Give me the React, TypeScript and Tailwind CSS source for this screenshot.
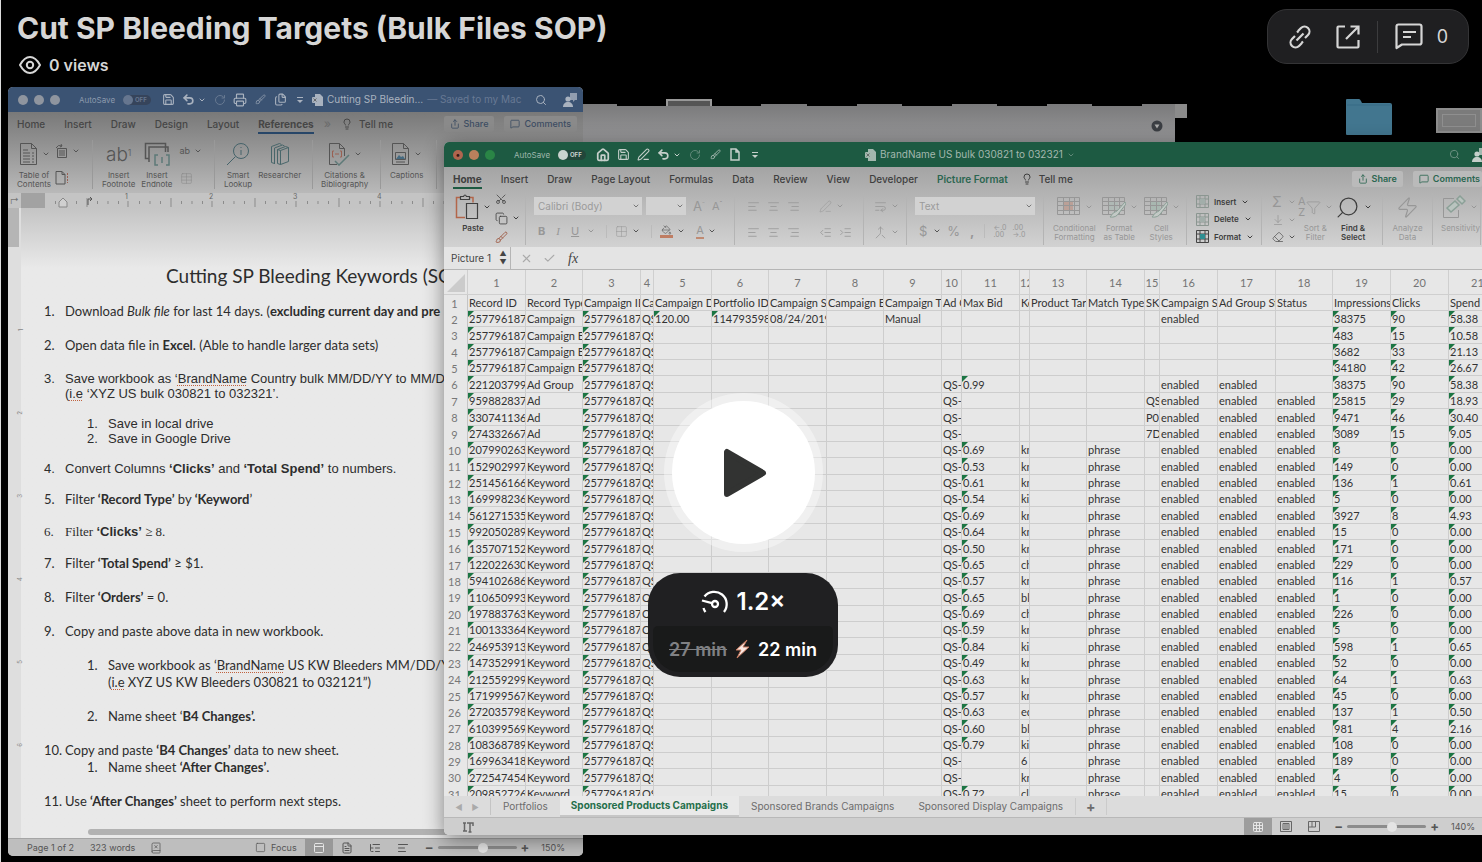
import type { ReactNode } from "react"
import {
  AlignCenter, AlignLeft, AlignRight, ArrowDownToLine, BookX, Brush, Check, ChevronDown, Copy, Eraser,
  FileText, Files, Funnel, Grid2x2, Grid3x3, House, IndentDecrease, IndentIncrease, Lightbulb, ListTree,
  Merge, MessageSquare, PaintBucket, PanelTop, PenLine, Printer, RotateCcw, Save, Scissors, Search, Share,
  Square, Table, Undo2, WrapText, X, Zap,
} from "lucide-react"

const ui = "font-['Inter',sans-serif]"
const doc = "font-['Lato',sans-serif]"
const arial = "font-['Liberation_Sans',sans-serif]"

const COLS = [
  "w-[24px]", "w-[58px]", "w-[57px]", "w-[58px]", "w-[13px]", "w-[58px]", "w-[57px]", "w-[58px]",
  "w-[57px]", "w-[58px]", "w-[20px]", "w-[58px]", "w-[10px]", "w-[57px]", "w-[58px]", "w-[15px]",
  "w-[58px]", "w-[58px]", "w-[57px]", "w-[58px]", "w-[58px]", "w-[58px]",
]

const HEADERS = [
  "Record ID", "Record Type", "Campaign ID", "Ca", "Campaign D", "Portfolio ID", "Campaign S",
  "Campaign E", "Campaign T", "Ad G", "Max Bid", "Ke", "Product Tar", "Match Type", "SKU",
  "Campaign S", "Ad Group St", "Status", "Impressions", "Clicks", "Spend",
]

const on = "enabled"
const campaign = "257796187"

// record, bid, keyword, impressions, clicks, spend
const KEYWORDS = [
  ["207990263", "0.69", "kn", "8", "0", "0.00"],
  ["152902997", "0.53", "kn", "149", "0", "0.00"],
  ["251456166", "0.61", "kn", "136", "1", "0.61"],
  ["169998236", "0.54", "ki", "5", "0", "0.00"],
  ["561271535", "0.69", "kn", "3927", "8", "4.93"],
  ["992050289", "0.64", "kn", "15", "0", "0.00"],
  ["135707152", "0.50", "kn", "171", "0", "0.00"],
  ["122022630", "0.65", "ch", "229", "0", "0.00"],
  ["594102686", "0.57", "kn", "116", "1", "0.57"],
  ["110650993", "0.65", "bl", "1", "0", "0.00"],
  ["197883763", "0.69", "ch", "226", "0", "0.00"],
  ["100133364", "0.59", "kn", "5", "0", "0.00"],
  ["246953913", "0.84", "ki", "598", "1", "0.65"],
  ["147352991", "0.49", "kn", "52", "0", "0.00"],
  ["212559299", "0.63", "kn", "64", "1", "0.63"],
  ["171999567", "0.57", "kn", "45", "0", "0.00"],
  ["272035798", "0.63", "ed", "137", "1", "0.50"],
  ["610399569", "0.60", "bl", "981", "4", "2.16"],
  ["108368789", "0.79", "ki", "108", "0", "0.00"],
  ["169963418", "", "6", "189", "0", "0.00"],
  ["272547454", "", "kn", "4", "0", "0.00"],
  ["209852726", "0.72", "cl", "15", "0", "0.00"],
]

const ROWS: string[][] = [
  HEADERS,
  [campaign, "Campaign", campaign, "QS", "120.00", "114793598", "08/24/2019", "", "Manual", "", "", "", "", "", "", on, "", "", "38375", "90", "58.38"],
  [campaign, "Campaign B", campaign, "QS", "", "", "", "", "", "", "", "", "", "", "", "", "", "", "483", "15", "10.58"],
  [campaign, "Campaign B", campaign, "QS", "", "", "", "", "", "", "", "", "", "", "", "", "", "", "3682", "33", "21.13"],
  [campaign, "Campaign B", campaign, "QS", "", "", "", "", "", "", "", "", "", "", "", "", "", "", "34180", "42", "26.67"],
  ["221203799", "Ad Group", campaign, "QS", "", "", "", "", "", "QS-", "0.99", "", "", "", "", on, on, "", "38375", "90", "58.38"],
  ["959882837", "Ad", campaign, "QS", "", "", "", "", "", "QS-", "", "", "", "", "QS", on, on, on, "25815", "29", "18.93"],
  ["330741136", "Ad", campaign, "QS", "", "", "", "", "", "QS-", "", "", "", "", "P0", on, on, on, "9471", "46", "30.40"],
  ["274332667", "Ad", campaign, "QS", "", "", "", "", "", "QS-", "", "", "", "", "7D", on, on, on, "3089", "15", "9.05"],
  ...KEYWORDS.map(([id, bid, kw, imp, clicks, spend]) => [
    id, "Keyword", campaign, "QS", "", "", "", "", "", "QS-", bid, kw, "", "phrase", "", on, on, on, imp, clicks, spend,
  ]),
]

// columns whose numbers are stored as text get the green corner
const FLAGGED = [0, 2, 4, 5, 10, 18, 19, 20]
const flag =
  "before:absolute before:left-0 before:top-0 before:size-[6px] before:bg-[#1b7543] before:[clip-path:polygon(0_0,100%_0,0_100%)]"

function Caret({ className = "" }: { className?: string }) {
  return <ChevronDown size={8} strokeWidth={3} className={`shrink-0 ${className}`} />
}

function Toggle({ className }: { className: string }) {
  return (
    <button className={`flex h-[10px] w-[28px] items-center gap-[2px] rounded-full text-[6px] font-bold ${className}`} aria-label="AutoSave">
      <span className="size-[10px] rounded-full bg-current" />
      OFF
    </button>
  )
}

function Glyph({ w = 24, h = 24, children }: { w?: number; h?: number; children: ReactNode }) {
  return (
    <svg width={w} height={h} viewBox={`0 0 ${w} ${h}`} fill="none" stroke="currentColor" strokeWidth="1" className="shrink-0">
      {children}
    </svg>
  )
}

function TocIcon() {
  return (
    <Glyph w={19}>
      <path d="M1.5 1.500h11l5 5v16h-16zM12.500 1.500v5h5" />
      <path d="M4 8h5M4 11h7M4 14h7M4 17h7M4 20h7M13 11h2M13 14h2M13 17h2M13 20h2" />
    </Glyph>
  )
}

function EndnoteIcon() {
  return (
    <Glyph w={26}>
      <path d="M5 16.500H1.500v-15h20V10M5 20V5h19v5" strokeWidth="1.500" />
      <path d="M14 13h-3v10h3M22 13h3v10h-3M18 15v6" stroke="#5e7a78" strokeWidth="1.500" />
    </Glyph>
  )
}

function BooksIcon() {
  return (
    <Glyph w={20}>
      <path d="M1.500 4.500l8-3 2 1M1.500 4.500v16l3 1M4.500 6l8-3 2 1M4.500 6v16M7.500 7.500l3 1v14l-3-1zM10.500 8.500l8-3v14l-8 3M7.500 7.500l8-3 3 1" stroke="#48666a" />
    </Glyph>
  )
}

function CitationIcon() {
  return (
    <Glyph w={22}>
      <path d="M9 22.500H1.500v-21h10l5 5V14M11.500 1.500v5h5" />
      <path d="M6 9H4.500v6H6M12 9h1.500v6H12M7 12h4" stroke="#9a6052" />
      <path d="M7 19l4 4 10-10" stroke="#5e7a78" strokeWidth="1.500" />
    </Glyph>
  )
}

function CaptionIcon() {
  return (
    <Glyph w={19}>
      <path d="M1.500 1.500h11l5 5v16h-16zM12.500 1.500v5h5M5 20h9" />
      <path d="M4.500 10.500h10v7h-10z" />
      <path d="M5 17l3-4 2 2 2-1 2 3z" fill="#456a80" stroke="none" />
    </Glyph>
  )
}

function PasteIcon() {
  return (
    <Glyph w={24} h={26}>
      <path d="M6 3.500H1.500v20H10M14 3.500h4v5" stroke="#b3664a" strokeWidth="1.500" />
      <path d="M5.500 5.500v-3h3q1.500-3 3 0h3v3zM11.500 9.500h11v15h-11z" strokeWidth="1.200" />
    </Glyph>
  )
}

function GridGlyph({ brush = false, accent = "#a9b9b2" }: { brush?: boolean; accent?: string }) {
  return (
    <Glyph w={25} h={24}>
      <rect x="8" y="6" width="9" height="9" fill={accent} stroke="none" opacity="0.6" />
      <path d="M1.500 2.500h22v17h-22zM1.500 6.500h22M1.500 10.500h22M1.500 15.500h22M7.500 2.500v17M13.500 2.500v17M18.500 2.500v17" />
      {brush && <path d="M24 7l-8 9q-4 1-7 6 6 1 9-4l7-9z" fill="#c3c9c6" stroke="#8ba097" />}
    </Glyph>
  )
}

function SensitivityIcon() {
  return (
    <Glyph w={24}>
      <path d="M12 3.500H1.500v19h15V15" />
      <path d="M5 13l8-7 4 4-8 7zM15 4l3-3 5 5-3 3z" stroke="#8ba097" strokeWidth="1.500" fill="#b9c4bf" />
    </Glyph>
  )
}

function CellsIcon({ active = false }: { active?: boolean }) {
  return (
    <svg width="13" height="13" viewBox="0 0 13 13" fill="none" stroke={active ? "#444" : "#8b9691"}>
      <path d="M.5.500h12v12H.500zM.500 4h12M.500 9h12M4 .500v12M9 .500v12" />
      <rect x="4" y="4" width="5" height="5" fill={active ? "#2f8f92" : "#a2aeaa"} stroke="none" />
    </svg>
  )
}

function DocIcon() {
  return (
    <svg width="11" height="12" viewBox="0 0 11 12" fill="currentColor">
      <path d="M3 0h5l3 3v9H3z" />
      <rect x="0" y="3" width="6" height="6" rx="1" />
      <path d="M1.500 4.500l3 3m0-3l-3 3" stroke="#555" strokeWidth="0.8" />
    </svg>
  )
}

function PersonIcon() {
  return (
    <svg width="14" height="14" viewBox="0 0 14 14" fill="currentColor">
      <path d="M7 0h7v7h-2l-2 2V7H7z" opacity="0.8" />
      <circle cx="5" cy="6" r="2.600" />
      <path d="M0 14c0-3 2-5 5-5s5 2 5 5z" />
    </svg>
  )
}

function QuickMenu() {
  return (
    <svg width="8" height="8" viewBox="0 0 8 8" fill="currentColor">
      <rect x="1" y="1" width="6" height="1" />
      <path d="M1 4h6L4 7z" />
    </svg>
  )
}

function TitleBox({ children }: { children: ReactNode }) {
  return <span className="flex w-5 shrink-0 items-center justify-center">{children}</span>
}

function BigTool({ icon, label, className = "", caret = false }: { icon: ReactNode; label: ReactNode; className?: string; caret?: boolean }) {
  return (
    <button className={`flex shrink-0 flex-col items-center text-center text-[8px] leading-[9px] ${className}`}>
      <span className="flex h-7 items-center gap-1">
        {icon}
        {caret && <Caret />}
      </span>
      <span className="mt-[3px] whitespace-nowrap">{label}</span>
    </button>
  )
}

function WordTitleBar() {
  return (
    <div className="flex h-[25px] shrink-0 items-center bg-[#3b5373] text-[9px] text-[#a9b2bf]">
      <div className="flex w-[71px] gap-[6px] pl-[10px]">
        <span className="size-[10px] rounded-full bg-[#8f959f]" />
        <span className="size-[10px] rounded-full bg-[#8f959f]" />
        <span className="size-[10px] rounded-full bg-[#8f959f]" />
      </div>
      <span className="w-[44px] text-[8px] text-[#8c9aad]">AutoSave</span>
      <Toggle className="bg-[#36445b] text-[#66768f]" />
      <div className="ml-[7px] flex items-center">
        <TitleBox><Save size={13} /></TitleBox>
        <TitleBox><Undo2 size={13} strokeWidth={3} /></TitleBox>
        <Caret className="mr-1" />
        <TitleBox><RotateCcw size={12} className="-scale-x-100 opacity-40" /></TitleBox>
        <TitleBox><Printer size={14} /></TitleBox>
        <TitleBox><Brush size={11} className="opacity-70" /></TitleBox>
        <TitleBox><Files size={13} /></TitleBox>
        <TitleBox><QuickMenu /></TitleBox>
      </div>
      <span className="ml-[2px] flex items-center gap-1 whitespace-nowrap text-[10px]">
        <DocIcon /> Cutting SP Bleedin…
        <span className="text-[#687993]">— Saved to my Mac</span>
      </span>
      <div className="ml-auto flex items-center gap-4 pr-[6px]">
        <Search size={12} strokeWidth={2} />
        <PersonIcon />
      </div>
    </div>
  )
}

function WordRibbon() {
  return (
    <div className="shrink-0 bg-linear-to-b from-[#797979] to-[#b9b9b9] text-[#464646]">
      <nav className="flex h-6 items-center pl-[9px] text-[10px] font-medium">
        <div className="flex gap-[19px]">
          {["Home", "Insert", "Draw", "Design", "Layout"].map((tab) => (
            <button key={tab}>{tab}</button>
          ))}
          <button className="border-b-2 border-[#274668] pt-[2px] font-bold">References</button>
        </div>
        <span className="mx-[10px] text-[12px] text-[#6d6d6d]">»</span>
        <Lightbulb size={12} />
        <button className="ml-[6px]">Tell me</button>
        <button className="ml-auto flex items-center gap-1 rounded-xs bg-[#8a8a8a] px-[6px] py-px text-[9px] text-[#3d4d63]">
          <Share size={10} /> Share
        </button>
        <button className="mr-[6px] ml-[10px] flex items-center gap-1 rounded-xs bg-[#8a8a8a] px-[6px] py-px text-[9px] text-[#3d4d63]">
          <MessageSquare size={10} /> Comments
        </button>
      </nav>
      <div className="flex h-[57px] items-stretch text-[#555] [&>div]:my-1 [&>div]:shrink-0 [&>div]:border-r [&>div]:border-[#999]">
        <div className="flex w-[85px] gap-1 pl-[9px]">
          <BigTool icon={<TocIcon />} caret label={<>Table of<br />Contents</>} />
          <div className="flex flex-col justify-between py-1">
            <span className="flex items-center gap-1">
              <Glyph w={13} h={14}><path d="M2.500 4.500h9v9h-9zM4 7h6M4 9h6M4 11h6M1 4q2-4 6-2l-1-2m1 2l-2 1" /></Glyph>
              <Caret />
            </span>
            <Glyph w={14} h={14}><path d="M1 .500h6l3 3v9.500H1zM7 .500v3h3" /><path d="M12.500 2v10" stroke="#9a6052" strokeDasharray="2 1" /></Glyph>
          </div>
        </div>
        <div className="flex w-[122px] gap-[6px] pl-[9px]">
          <BigTool icon={<span className="text-[19px] font-light">ab<sup className="text-[9px]">1</sup></span>} label={<>Insert<br />Footnote</>} />
          <BigTool icon={<EndnoteIcon />} label={<>Insert<br />Endnote</>} />
          <div className="flex flex-col justify-between py-1 pl-px">
            <span className="flex items-center gap-1 text-[9px]">ab<Caret /></span>
            <Table size={13} strokeWidth={1} className="opacity-40" />
          </div>
        </div>
        <div className="flex w-[98px] gap-[6px] pl-[9px]">
          <BigTool
            icon={
              <Glyph>
                <circle cx="15" cy="9" r="7.500" stroke="#45636a" />
                <path d="M9.500 14.500L1 23M15 8v5M15 5v1" stroke="#45636a" />
              </Glyph>
            }
            label={<>Smart<br />Lookup</>}
          />
          <BigTool icon={<BooksIcon />} label="Researcher" />
        </div>
        <div className="flex w-[68px] pl-2">
          <BigTool icon={<CitationIcon />} caret label={<>Citations &amp;<br />Bibliography</>} />
        </div>
        <div className="flex w-[56px] pl-[9px]">
          <BigTool icon={<CaptionIcon />} caret label="Captions" />
        </div>
      </div>
    </div>
  )
}

function Squiggle({ children }: { children: ReactNode }) {
  return <span className="underline decoration-[#c0623f] decoration-dotted decoration-1 underline-offset-2">{children}</span>
}

function Item({ n, children, className = "" }: { n: string; children: ReactNode; className?: string }) {
  return (
    <li className={`flex ${className}`}>
      <span className="w-[21px] shrink-0">{n}</span>
      <div>{children}</div>
    </li>
  )
}

function WordPage() {
  return (
    <div className="flex min-h-0 flex-1">
      <div className="flex w-[13px] shrink-0 flex-col items-end gap-[83px] bg-[#dedede] pr-[2px] text-[6px] leading-none text-[#888]">
        <span className="h-[39px] w-[11px] bg-[#b5b5b5]" />
        {[1, 2, 3, 4, 5, 6].map((n) => (
          <span key={n} className="h-0 -rotate-90">{n}</span>
        ))}
      </div>
      <div className="flex min-w-0 flex-1 flex-col overflow-hidden bg-[#e9e9e9] bg-linear-to-b from-[#c4c4c4] to-[#e9e9e9] to-[60px]">
        <div className={`flex-1 pt-14 pl-[23px] text-[13px] leading-[17px] whitespace-nowrap text-[#2d2d2d] ${doc}`}>
          <h2 className="pl-[122px] text-[19px] leading-6">Cutting SP Bleeding Keywords (SO</h2>
          <ol className="mt-[15px]">
            <Item n="1.">
              Download <em>Bulk file</em> for last 14 days. (<b>excluding current day and pre</b>
            </Item>
            <Item n="2." className="mt-[17px]">
              Open data file in <b>Excel</b>. (Able to handle larger data sets)
            </Item>
            <Item n="3." className={`mt-[17px] leading-[15px] ${arial}`}>
              Save workbook as ‘<Squiggle>BrandName</Squiggle> Country bulk MM/DD/YY to MM/DD<br />
              (<Squiggle>i.e</Squiggle> ‘XYZ US bulk 030821 to 032321’.
              <ol className="mt-[15px] pl-[22px]">
                <Item n="1.">Save in local drive</Item>
                <Item n="2.">Save in Google Drive</Item>
              </ol>
            </Item>
            <Item n="4." className={`mt-[15px] leading-[15px] ${arial}`}>
              Convert Columns <b>‘Clicks’</b> and <b>‘Total Spend’</b> to numbers.
            </Item>
            <Item n="5." className="mt-[15px]">
              Filter <b>‘Record Type’</b> by <b>‘Keyword</b>’
            </Item>
            <Item n="6." className="mt-[15px] font-['Liberation_Serif',serif]">
              Filter <b className={arial}>‘Clicks’</b> ≥ 8.
            </Item>
            <Item n="7." className="mt-[15px]">
              Filter <b>‘Total Spend’</b> ≥ $1.
            </Item>
            <Item n="8." className="mt-[17px]">
              Filter <b>‘Orders’</b> = 0.
            </Item>
            <Item n="9." className="mt-[17px]">
              Copy and paste above data in new workbook.
              <ol className="mt-[17px] pl-[22px]">
                <Item n="1.">
                  Save workbook as ‘<Squiggle>BrandName</Squiggle> US KW Bleeders MM/DD/YY<br />
                  (<Squiggle>i.e</Squiggle> XYZ US KW Bleeders 030821 to 032121”)
                </Item>
                <Item n="2." className="mt-[17px]">Name sheet ‘<b>B4 Changes’.</b></Item>
              </ol>
            </Item>
            <Item n="10." className="mt-[17px]">
              Copy and paste <b>‘B4 Changes’</b> data to new sheet.
              <ol className="pl-[22px]">
                <Item n="1.">Name sheet <b>‘After Changes’</b>.</Item>
              </ol>
            </Item>
            <Item n="11." className="mt-[17px]">
              Use <b>‘After Changes’</b> sheet to perform next steps.
            </Item>
          </ol>
        </div>
        <div className="mb-[3px] ml-[67px] h-[6px] shrink-0 rounded-l-full bg-[#b2b2b2]" />
      </div>
    </div>
  )
}

function Zoom({ value, thumb }: { value: string; thumb: number }) {
  return (
    <div className="flex items-center gap-1 text-[#555]">
      <button className="text-[13px] leading-none font-bold" aria-label="Zoom out">−</button>
      <input
        type="range"
        aria-label="Zoom"
        defaultValue={thumb}
        className="h-[3px] w-[79px] appearance-none rounded-full bg-[#8c8c8c] [&::-webkit-slider-thumb]:size-[10px] [&::-webkit-slider-thumb]:appearance-none [&::-webkit-slider-thumb]:rounded-full [&::-webkit-slider-thumb]:bg-[#e4e4e4]"
      />
      <button className="text-[13px] leading-none font-bold" aria-label="Zoom in">+</button>
      <span className="ml-2 text-[9px]">{value}</span>
    </div>
  )
}

function WordWindow() {
  return (
    <section className={`absolute top-[87px] bottom-[6px] left-2 flex w-[575px] flex-col overflow-hidden rounded-[5px] bg-[#c6c6c6] ${ui}`}>
      <WordTitleBar />
      <WordRibbon />
      <div className="flex h-[15px] shrink-0 items-center bg-[#c4c4c4] text-[7px] text-[#777]">
        <span className="w-[13px] text-center text-[9px]">↱</span>
        <span className="h-full w-[24px] bg-[#a2a2a2]" />
        <svg className="h-full flex-1" preserveAspectRatio="xMinYMin slice">
          <defs>
            <pattern id="ticks" width="84" height="15" patternUnits="userSpaceOnUse">
              <path d="M10.500 8v3M21 8v3M31.500 8v3M42 5v9M52.500 8v3M63 8v3M73.500 8v3M83 8v6" stroke="#8b8b8b" fill="none" />
            </pattern>
          </defs>
          <rect width="100%" height="15" fill="url(#ticks)" />
          <path d="M14 9l4-4 4 4v5h-8z" fill="#d0d0d0" stroke="#888" />
          <path d="M43 12V6h4m-2-2l2 2-2 2" fill="none" stroke="#555" />
          {[1, 2, 3, 4].map((n) => (
            <text key={n} x={n * 84 - 4} y="6" fill="#666">{n}</text>
          ))}
        </svg>
      </div>
      <WordPage />
      <footer className="flex h-[18px] shrink-0 items-center border-t border-[#a5a5a5] bg-[#bebebe] pl-[19px] text-[9px] text-[#555]">
        <span>Page 1 of 2</span>
        <span className="ml-4">323 words</span>
        <BookX size={12} strokeWidth={1.5} className="ml-[15px]" />
        <div className="ml-auto flex h-full items-center">
          <Square size={11} strokeWidth={1.5} className="mr-[5px]" />
          <span>Focus</span>
          <button className="mx-2 flex h-full w-7 items-center justify-center bg-[#989898] text-[#e5e5e5]" aria-label="Print layout"><PanelTop size={12} /></button>
          <FileText size={12} className="mr-4" />
          <ListTree size={12} className="mr-4" />
          <AlignLeft size={12} className="mr-4" />
          <Zoom value="150%" thumb={58} />
        </div>
        <span className="w-[18px]" />
      </footer>
    </section>
  )
}

function ExcelTitleBar() {
  return (
    <div className="flex h-[25px] shrink-0 items-center bg-[#1d5a42] text-[#c5cfca]">
      <div className="flex w-[70px] gap-[6px] pl-[9px]">
        <span className="flex size-[10px] items-center justify-center rounded-full bg-[#b0654f] text-[9px] leading-none font-bold text-[#3b1510]">•</span>
        <span className="size-[10px] rounded-full bg-[#b8805c]" />
        <span className="size-[10px] rounded-full bg-[#2a8546]" />
      </div>
      <span className="w-[44px] text-[8px] text-[#9fb8ad]">AutoSave</span>
      <Toggle className="bg-[#22463a] text-[#c9d2ce]" />
      <div className="flex w-[279px] items-center pl-[7px]">
        <TitleBox><House size={14} strokeWidth={3} /></TitleBox>
        <TitleBox><Save size={13} /></TitleBox>
        <TitleBox><PenLine size={13} /></TitleBox>
        <TitleBox><Undo2 size={13} strokeWidth={3} /></TitleBox>
        <Caret className="mr-1" />
        <TitleBox><RotateCcw size={12} className="-scale-x-100 opacity-40" /></TitleBox>
        <TitleBox><Brush size={11} className="opacity-80" /></TitleBox>
        <TitleBox>
          <Glyph w={10} h={13}><path d="M1 1h5l3 3v8H1zM6 1v3h3" strokeWidth="1.500" /></Glyph>
        </TitleBox>
        <TitleBox><QuickMenu /></TitleBox>
      </div>
      <span className="flex items-center gap-1 text-[10px] whitespace-nowrap text-[#a3b8ae]">
        <DocIcon /> BrandName US bulk 030821 to 032321
        <Caret className="opacity-50" />
      </span>
      <div className="ml-auto flex items-center gap-3">
        <Search size={11} className="opacity-50" />
        <span className="-mr-1"><PersonIcon /></span>
      </div>
    </div>
  )
}

function CellTool({ icon, label }: { icon: ReactNode; label: string }) {
  return (
    <button className="flex items-center gap-[5px] text-[8px] font-semibold text-[#3d3d3d]">
      {icon}
      {label}
      <Caret />
    </button>
  )
}

function Picker({ label, value, className }: { label: string; value: string; className: string }) {
  return (
    <label className={`relative flex h-[18px] items-center bg-[#d2d2d2] ${className}`}>
      <select aria-label={label} className="h-full w-full appearance-none pl-1 text-[10px] text-[#9a9a9a]">
        <option>{value}</option>
      </select>
      <Caret className="absolute right-[2px] text-[#777]" />
    </label>
  )
}

function ExcelRibbon() {
  const tabs = ["Insert", "Draw", "Page Layout", "Formulas", "Data", "Review", "View", "Developer"]
  return (
    <div className="shrink-0 bg-linear-to-b from-[#a4a4a4] to-[#d2d2d2] text-[#3f3f3f]">
      <nav className="flex h-6 items-center pl-[9px] text-[10px] font-medium whitespace-nowrap">
        <div className="flex gap-[19px]">
          <button className="border-b-2 border-[#1d5a42] pt-[2px] font-bold">Home</button>
          {tabs.map((tab) => (
            <button key={tab}>{tab}</button>
          ))}
          <button className="font-semibold text-[#2b6650]">Picture Format</button>
        </div>
        <Lightbulb size={12} className="ml-[13px]" />
        <button className="ml-[6px]">Tell me</button>
        <button className="ml-auto flex items-center gap-1 rounded-xs bg-[#bababa] px-[6px] py-px text-[9px] font-semibold text-[#2b6650]">
          <Share size={10} /> Share
        </button>
        <button className="ml-[10px] flex items-center gap-1 rounded-xs bg-[#bababa] py-px pr-[2px] pl-[6px] text-[9px] font-semibold text-[#2b6650]">
          <MessageSquare size={10} /> Comments
        </button>
      </nav>
      <div className="flex h-14 overflow-hidden text-[#979797] [&>div]:my-[2px] [&>div]:shrink-0 [&>div]:border-r [&>div]:border-[#b4b4b4]">
        <div className="flex w-[82px] gap-1 pl-[11px] text-[#3f3f3f]">
          <BigTool icon={<PasteIcon />} caret label="Paste" className="font-semibold" />
          <div className="flex flex-col justify-between pb-px">
            <Scissors size={12} strokeWidth={1.5} className="-rotate-90" />
            <span className="flex items-center gap-1"><Copy size={13} strokeWidth={1.5} /><Caret /></span>
            <Brush size={13} strokeWidth={1.5} className="text-[#9a5038]" />
          </div>
        </div>
        <div className="flex w-[209px] flex-col justify-between pt-1 pb-[6px] pl-2">
          <div className="flex items-center gap-1">
            <Picker label="Font" value="Calibri (Body)" className="w-[108px]" />
            <Picker label="Font size" value="" className="w-[40px]" />
            <span className="pl-[3px] text-[13px] leading-none">A<sup className="text-[7px]">ˆ</sup></span>
            <span className="pl-[3px] text-[11px] leading-none">A<sup className="text-[7px]">ˇ</sup></span>
          </div>
          <div className="flex items-center gap-[11px] pl-1 text-[11px] leading-4">
            <b>B</b>
            <i className="font-['Liberation_Serif',serif]">I</i>
            <span className="flex items-center gap-2"><u>U</u><Caret /></span>
            <span className="flex items-center gap-1 border-l border-[#bbb] pl-2"><Grid2x2 size={13} strokeWidth={1} /><Caret className="text-[#555]" /></span>
            <span className="flex items-center gap-1 border-l border-[#bbb] pl-2 text-[#555]"><PaintBucket size={13} strokeWidth={1.5} className="border-b-[3px] border-[#bf7d63]" /><Caret /></span>
            <span className="flex items-center gap-1"><span className="border-b-2 border-[#c08a72] leading-[13px]">A</span><Caret className="text-[#555]" /></span>
          </div>
        </div>
        <div className="grid w-[129px] grid-cols-[20px_20px_20px_auto] items-center pl-3">
          <AlignLeft size={13} strokeWidth={1.5} />
          <AlignCenter size={13} strokeWidth={1.5} />
          <AlignRight size={13} strokeWidth={1.5} />
          <span className="flex items-center gap-1 pl-3"><PenLine size={13} strokeWidth={1} /><Caret /></span>
          <AlignLeft size={13} strokeWidth={1.5} />
          <AlignCenter size={13} strokeWidth={1.5} />
          <AlignRight size={13} strokeWidth={1.5} />
          <span className="flex items-center gap-[7px] pl-3">
            <IndentDecrease size={13} strokeWidth={1.5} />
            <IndentIncrease size={13} strokeWidth={1.5} />
          </span>
        </div>
        <div className="flex w-[43px] flex-col justify-around pl-[10px]">
          <span className="flex items-center gap-1"><WrapText size={13} strokeWidth={1.5} /><Caret /></span>
          <span className="flex items-center gap-1"><Merge size={13} strokeWidth={1.5} /><Caret /></span>
        </div>
        <div className="flex w-[137px] flex-col justify-between pt-1 pb-[6px] pl-2">
          <Picker label="Number format" value="Text" className="w-[120px]" />
          <div className="flex items-center gap-[6px] pl-1 text-[13px] leading-4">
            <span className="flex items-center gap-[6px]">$<Caret className="text-[#555]" /></span>
            <span>%</span>
            <b className="px-1">,</b>
            <span className="border-l border-[#bbb] pl-2 text-[7px] leading-[7px]">←.0<br />.00</span>
            <span className="text-[7px] leading-[7px]">.00<br />→.0</span>
          </div>
        </div>
        <div className="flex w-[143px] gap-[5px] pl-[9px]">
          <BigTool icon={<GridGlyph accent="#bd8f80" />} caret label={<>Conditional<br />Formatting</>} />
          <BigTool icon={<GridGlyph brush />} caret label={<>Format<br />as Table</>} />
          <BigTool icon={<GridGlyph brush accent="#9db5aa" />} caret label={<>Cell<br />Styles</>} />
        </div>
        <div className="flex w-[75px] flex-col justify-between py-[2px] pl-[9px]">
          <CellTool icon={<CellsIcon />} label="Insert" />
          <CellTool icon={<CellsIcon />} label="Delete" />
          <CellTool icon={<CellsIcon active />} label="Format" />
        </div>
        <div className="flex w-[121px] gap-[2px] pl-[10px]">
          <div className="flex flex-col justify-between py-[2px]">
            <span className="flex items-center gap-1 text-[14px] leading-none"><span className="w-3">Σ</span><Caret /></span>
            <span className="flex items-center gap-1"><ArrowDownToLine size={12} strokeWidth={1.5} /><Caret /></span>
            <span className="flex items-center gap-1 text-[#555]"><Eraser size={12} strokeWidth={1.5} /><Caret /></span>
          </div>
          <BigTool
            icon={
              <span className="flex items-center">
                <span className="text-[11px] leading-[11px]">A<br />Z</span>
                <Funnel size={15} strokeWidth={1.2} />
              </span>
            }
            caret
            label={<>Sort &amp;<br />Filter</>}
          />
          <BigTool icon={<Search size={25} strokeWidth={1.2} className="-scale-x-100" />} caret label={<>Find &amp;<br />Select</>} className="font-semibold text-[#3f3f3f]" />
        </div>
        <div className="flex w-[50px] justify-center">
          <BigTool icon={<Zap size={23} strokeWidth={1.2} />} label={<>Analyze<br />Data</>} />
        </div>
        <div className="flex pl-2">
          <BigTool icon={<SensitivityIcon />} caret label="Sensitivity" />
        </div>
      </div>
    </div>
  )
}

function SheetGrid() {
  return (
    <div className="min-h-0 flex-1 overflow-hidden">
      <table className={`w-[1063px] table-fixed border-separate border-spacing-0 text-[11px] leading-[15px] text-[#333] ${doc}`}>
        <colgroup>
          {COLS.map((w, i) => (
            <col key={i} className={w} />
          ))}
        </colgroup>
        <thead>
          <tr className="h-[25px] text-[#747474]">
            <th className="relative border-r border-b border-[#cfcfcf] p-0">
              <span className="absolute right-[2px] bottom-[2px] size-[18px] bg-[#cbcbcb] [clip-path:polygon(100%_0,100%_100%,0_100%)]" />
            </th>
            {HEADERS.map((_, i) => (
              <th key={i} scope="col" className="overflow-hidden border-r border-b border-[#cfcfcf] p-0 font-normal">{i + 1}</th>
            ))}
          </tr>
        </thead>
        <tbody>
          {ROWS.map((row, r) => (
            <tr key={r} className={(r * 3) % 8 > 4 ? "h-[17px]" : "h-4"}>
              <th scope="row" className="border-r border-[#c4c4c4] p-0 pr-[2px] text-center font-normal text-[#777]">{r + 1}</th>
              {row.map((cell, c) => (
                <td
                  key={c}
                  className={`relative overflow-hidden border-r border-b border-[#cdcdcd] py-0 pr-0 pl-px whitespace-nowrap ${r > 0 && cell && FLAGGED.includes(c) ? flag : ""}`}
                >
                  {cell}
                </td>
              ))}
            </tr>
          ))}
        </tbody>
      </table>
    </div>
  )
}

function ExcelWindow() {
  return (
    <section className={`absolute top-[142px] right-0 bottom-[27px] left-[444px] flex flex-col overflow-hidden rounded-l-[5px] bg-[#e7e7e7] shadow-[0_4px_20px_rgba(0,0,0,0.45)] ${ui}`}>
      <ExcelTitleBar />
      <ExcelRibbon />
      <div className="flex h-[23px] shrink-0 items-center border-b border-[#b5b5b5] bg-[#e4e4e4] text-[#444]">
        <input aria-label="Name box" defaultValue="Picture 1" className="w-[52px] pl-[7px] text-[10px]" />
        <span className="flex h-full w-[15px] flex-col items-center justify-center gap-[3px] border-r border-[#b5b5b5] text-[7px] leading-[6px]">
          <span>▲</span>
          <span>▼</span>
        </span>
        <X size={13} className="ml-[9px] text-[#aaa]" />
        <Check size={13} className="ml-[10px] text-[#aaa]" />
        <i className="ml-3 font-['Liberation_Serif',serif] text-[14px]">fx</i>
      </div>
      <SheetGrid />
      <div className="flex h-[21px] shrink-0 items-stretch bg-[#dcdcdc] text-[10px] text-[#6c6c6c]">
        <div className="my-[2px] flex w-[47px] items-center justify-center gap-[9px] border-r border-[#c4c4c4] text-[8px] text-[#aaa]">
          <span>◀</span>
          <span>▶</span>
        </div>
        <button className="px-3">Portfolios</button>
        <button className="border-b-2 border-[#c6c6c6] bg-[#e9e9e9] px-[11px] font-bold text-[#256f4b]">Sponsored Products Campaigns</button>
        <button className="px-3">Sponsored Brands Campaigns</button>
        <button className="px-3">Sponsored Display Campaigns</button>
        <button className="my-[2px] border-x border-[#cbcbcb] px-[10px] text-[14px] leading-none font-bold" aria-label="Add sheet">+</button>
      </div>
      <footer className="flex h-[18px] shrink-0 items-center border-t border-[#b8b8b8] bg-[#cecece] pl-[18px] text-[#666]">
        <Glyph w={12} h={12}><path d="M1 2h3M2.500 2v8M1 10h4M5 2h6v3M8 2v9M6.500 11h3" strokeWidth="1.500" /></Glyph>
        <div className="ml-auto flex h-full items-center pr-[7px]">
          <button className="mr-2 flex h-full w-7 items-center justify-center bg-[#9d9d9d] text-[#e5e5e5]" aria-label="Normal view"><Grid3x3 size={12} /></button>
          <button className="mr-4" aria-label="Page layout view">
            <Glyph w={12} h={11}><path d="M.500.500h11v10H.500zM3 2.500h6v6H3zM5 3v5M7 3v5" /></Glyph>
          </button>
          <button className="mr-[14px]" aria-label="Page break view">
            <Glyph w={12} h={11}><path d="M.500.500h11v10H.500zM.500 6h7V.500M4 .500V6" /></Glyph>
          </button>
          <Zoom value="140%" thumb={57} />
        </div>
      </footer>
    </section>
  )
}

function Desktop() {
  return (
    <div className="absolute inset-0 overflow-hidden" aria-hidden>
      <span className="absolute top-[99px] left-[666px] h-[10px] w-[46px] border-2 border-[#999] bg-[#555]" />
      <svg className="absolute top-[103px] left-[583px]" width="605" height="40">
        <defs>
          <linearGradient id="back" x1="0" y1="0" x2="0" y2="1">
            <stop offset="0" stopColor="#7a7a7b" />
            <stop offset="1" stopColor="#98989a" />
          </linearGradient>
        </defs>
        <path d="M0 1h34v2h144v-2h46v2h50v-2h45v2h50v-2h45v2h50v-2h45v2h50v-2h33v39H0z" fill="url(#back)" />
        <path d="M592 1h12v14h-12z" fill="#8b8b8b" />
        <circle cx="574" cy="23" r="5.500" fill="#3b3e43" />
        <path d="M571.500 21.500h5l-2.500 4z" fill="#aaa" />
      </svg>
      <svg className="absolute top-[99px] left-[1346px]" width="46" height="37">
        <path d="M0 1q0-1 1-1h12q1 0 2 2l1 2h28q2 0 2 2v29q0 1-1 1H1q-1 0-1-1z" fill="#42768f" />
        <path d="M1 6h44" stroke="#376a85" />
      </svg>
      <div className="absolute top-[108px] right-0 h-[25px] w-[46px] border-2 border-[#8d8d8d] bg-[#7b7b7b] p-1">
        <div className="h-full border border-[#8f8f8f]" />
      </div>
    </div>
  )
}

function PlayOverlay() {
  return (
    <div className={`relative flex flex-col items-center gap-[21px] pt-[393px] pl-1 ${ui}`}>
      <button className="flex size-[159px] items-center justify-center rounded-full bg-white/40 p-[8px]" aria-label="Play">
        <span className="flex size-full items-center justify-center rounded-full bg-white">
          <svg width="46" height="52" viewBox="0 0 46 52" className="ml-1">
            <path d="M5 5v42l36-21z" fill="#323332" stroke="#323332" strokeWidth="6" strokeLinejoin="round" />
          </svg>
        </span>
      </button>
      <div className="flex w-[190px] flex-col rounded-[32px] bg-[#202022] p-[5px] text-white">
        <button className="flex h-12 items-center justify-center gap-2 text-[24px] font-semibold">
          <svg width="28" height="26" viewBox="0 0 28 26" fill="none" stroke="currentColor" strokeWidth="2.300">
            <path d="M3.500 7.500A12 12 0 1 1 23 23M4.500 23A12 12 0 0 1 2.500 19" />
            <circle cx="14" cy="15" r="3" />
            <path d="M11 14.200L1 11.500" />
          </svg>
          1.2×
        </button>
        <div className="flex h-[46px] items-center justify-center gap-2 rounded-t-[5px] rounded-b-[27px] bg-[#191a1a] text-[18px] font-semibold">
          <s className="text-[#808184]">27 min</s>
          <svg width="15" height="20" viewBox="0 0 15 20">
            <path d="M12 1L1 11h5l-4 8L14 8H8z" fill="#fbe9e2" stroke="#c4775c" strokeLinejoin="round" />
          </svg>
          <span>22 min</span>
        </div>
      </div>
    </div>
  )
}

export default function App() {
  return (
    <main className={`relative h-screen overflow-hidden bg-black shadow-[inset_1px_0_#dcdcdc] ${ui}`}>
      <Desktop />
      <WordWindow />
      <ExcelWindow />

      <header className="absolute inset-x-0 top-0 flex items-start justify-between pt-[9px] pr-[13px] pl-[17px] text-[#d6d6d6]">
        <div>
          <h1 className="text-[30px] leading-[38px] font-bold">Cut SP Bleeding Targets (Bulk Files SOP)</h1>
          <p className="mt-2 flex items-center gap-2 pl-[2px] text-[16px] leading-5 font-semibold">
            <svg width="22" height="20" viewBox="0 0 22 20" fill="none" stroke="currentColor" strokeWidth="2">
              <path d="M1 10C4 4.500 7 2 11 2s7 2.500 10 8c-3 5.500-6 8-10 8S4 15.500 1 10z" />
              <circle cx="11" cy="10" r="3.200" />
            </svg>
            0 views
          </p>
        </div>
        <div className="flex h-[55px] items-center rounded-[20px] border border-[#343436] bg-[#1f1f21] px-5 text-[18px]">
          <button aria-label="Copy link">
            <svg width="24" height="24" viewBox="0 0 24 24" fill="none" stroke="currentColor" strokeWidth="2.200">
              <path d="M10 6l3-3a4.800 4.800 0 0 1 7 7l-3 3M14 18l-3 3a4.800 4.800 0 0 1-7-7l3-3M8.500 15.500l7-7" />
              <path d="M9 7.500l1.500-1.500M15 16.500L13.500 18" />
            </svg>
          </button>
          <button className="ml-6" aria-label="Open in new tab">
            <svg width="24" height="24" viewBox="0 0 24 24" fill="none" stroke="currentColor" strokeWidth="2.200">
              <path d="M9 1.500H2.500q-1 0-1 1v19q0 1 1 1h19q1 0 1-1V15M14.500 1.500h8v8M22 2L10 14" />
            </svg>
          </button>
          <span className="mx-[17px] h-8 w-px bg-[#3c3c3e]" />
          <button className="flex items-center gap-[14px]" aria-label="Comments">
            <svg width="28" height="27" viewBox="0 0 28 27" fill="none" stroke="currentColor" strokeWidth="2.200">
              <path d="M1.500 25V3.500q0-2 2-2h21q2 0 2 2v16q0 2-2 2H7z" strokeLinejoin="round" />
              <path d="M8 9h13M8 14h8" />
            </svg>
            <span>0</span>
          </button>
        </div>
      </header>

      <PlayOverlay />
    </main>
  )
}
